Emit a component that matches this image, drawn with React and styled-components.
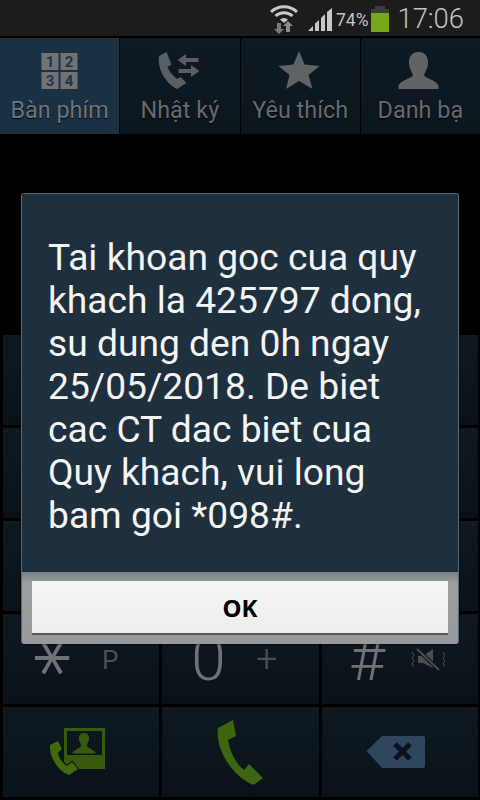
import React from "react";
import styled, { createGlobalStyle } from "styled-components";

const Global = createGlobalStyle`
  html, body { margin: 0; padding: 0; background: #000; }
  body { font-family: Roboto, "Noto Sans", sans-serif; }
`;
const Screen = styled.div`
  position: relative; width: 480px; height: 800px; overflow: hidden; background: #000;
  display: flex; flex-direction: column;
`;
const StatusBar = styled.div`
  height: 36px; background: #1c1c1c; display: flex; align-items: center; justify-content: flex-end;
  padding-right: 16px; flex-shrink: 0; color: #c4c4c4;
`;
const WifiIcon = styled.svg`margin-top: 1px;`;
const SignalIcon = styled.svg`margin: 3px 0 0 10px;`;
const BatteryIcon = styled.svg`margin: 2px 0 0 3px;`;
const Percent = styled.span`font-size: 17.5px; margin: 3px 0 0 4px;`;
const Clock = styled.span`font-size: 27.4px; margin-left: 8px; font-weight: 300; margin-top: 1px;`;
const Tabs = styled.div`
  height: 96px; margin-top: 2px; display: grid; grid-template-columns: repeat(4, 1fr); gap: 1px; flex-shrink: 0;
`;
const Tab = styled.div`
  background: ${p => p.$active ? "#1a3043" : "linear-gradient(#0e1a23,#0c161d)"};
  display: flex; flex-direction: column; align-items: center;
  font-size: 23.4px; padding-top: 9px; box-sizing: border-box;
  svg { height: 48px; width: 48px; display: block; }
`;
const TabLabel = styled.span`
  line-height: 30px; color: ${p => p.$active ? "#6f7478" : "#676b6e"};
  text-shadow: 0 1px 1px #000;
`;
const Keypad = styled.div`
  margin-top: auto; height: 465px; padding: 0 3px 3px; box-sizing: border-box;
  display: grid; grid-template-columns: 156px 157px 156px; grid-template-rows: repeat(5, 1fr); gap: 3px;
`;
const Key = styled.div`
  background: linear-gradient(#0e1922, #0a1218); display: flex; align-items: center; justify-content: center; position: relative;
  color: #707274;
`;
const Digit = styled.span`
  font-size: 62px; font-weight: 300; line-height: 1; position: relative;
  left: ${p => p.$x || 0}px; top: ${p => p.$y || 0}px;
`;
const Asterisk = styled.span`
  font-family: "DejaVu Sans", sans-serif; font-size: 74px; line-height: 1; position: absolute;
  left: 18px; top: 7px; transform: rotate(90deg);
`;
const Sub = styled.span`
  font-size: ${p => p.$size || 26}px; font-weight: ${p => p.$weight || 400}; color: #4c5054; position: absolute; line-height: 1;
  left: ${p => p.$x}px; top: ${p => p.$y}px;
`;
const Dialog = styled.div`
  position: absolute; left: 21px; top: 193px; width: 438px; height: 451px; border-radius: 3px; overflow: hidden;
  display: flex; flex-direction: column; box-sizing: border-box; border: 1px solid #5d6a74; border-bottom: none;
  box-shadow: 0 0 2px #000;
`;
const Message = styled.div`
  flex: 1; background: #1e2f3e; color: #f5f5f5; font-size: 37.2px; line-height: 43px; padding: 42px 0 0 26px;
  white-space: pre-line;
`;
const Footer = styled.div`
  height: 72px; background: linear-gradient(#7c8185, #9b9fa2 12px, #969a9d); padding: 9px 10px 0; box-sizing: border-box; flex-shrink: 0;
`;
const OkButton = styled.div`
  height: 52px; background: linear-gradient(#f5f5f5, #eeeeee); box-shadow: 0 2px 0 #55595c;
  display: flex; align-items: center; justify-content: center; color: #000;
  font-family: "Noto Sans", sans-serif; font-weight: 700; font-size: 24px;
`;
const BackspaceIcon = styled.svg`margin-right: 8px;`;
const CardIcon = styled.svg`margin-right: 7px;`;
const MuteIcon = styled.svg`position: absolute; left: 89px; top: 34px;`;

const Wifi = () => (
  <WifiIcon width="28" height="30" viewBox="0 0 28 30">
    <path d="M1 8a19 19 0 0 1 26 0" fill="none" stroke="#c8c8c8" strokeWidth="3" />
    <path d="M5.5 12a12.5 12.5 0 0 1 17 0" fill="none" stroke="#c8c8c8" strokeWidth="3" />
    <path d="M10 15.5a6 6 0 0 1 8 0l-4 3.5z" fill="#c8c8c8" />
    <path d="M9 30l-5-5h3v-6h4v6h3z" fill="#7a7a7a" />
    <path d="M18 17l5 5h-3v6h-4v-6h-3z" fill="#8a8a8a" />
  </WifiIcon>
);
const Signal = () => (
  <SignalIcon width="24" height="23" viewBox="0 0 24 23" fill="#c8c8c8">
    <path d="M0 23L5 18V23ZM7 23V15.5L11 12V23ZM13 23V10L17 6V23ZM19 23V4L24 0V23Z" />
  </SignalIcon>
);
const Battery = () => (
  <BatteryIcon width="18" height="26" viewBox="0 0 18 26">
    <rect x="4" y="0" width="10" height="3" fill="#3c3c3c" />
    <rect x="0" y="3" width="18" height="5" fill="#3c3c3c" />
    <rect x="0" y="7" width="18" height="19" fill="#76a81a" />
  </BatteryIcon>
);
const Dial = () => (
  <svg viewBox="0 0 48 48">
    <g fill="#707274">
      <rect x="5.5" y="6" width="17" height="17" /><rect x="24.5" y="6" width="17" height="17" />
      <rect x="5.5" y="25" width="17" height="17" /><rect x="24.5" y="25" width="17" height="17" />
    </g>
    <g fill="#1f364a" fontSize="15" fontWeight="700" fontFamily="Roboto" textAnchor="middle">
      <text x="14" y="20">1</text><text x="33" y="20">2</text>
      <text x="14" y="39">3</text><text x="33" y="39">4</text>
    </g>
  </svg>
);
const Log = () => (
  <svg viewBox="0 0 48 48" fill="#5a5e61">
    <path d="M10.5 5L3 9C1 21 9 36 21 42L30.5 36L24.5 30L21 32C16 28 13 24 11.5 20L15.5 17.5Z" />
    <path d="M21.5 13L30 7V11H42.5V15H30V19ZM43.5 24L35 18V22H22.5V26H35V30Z" />
  </svg>
);
const Star = () => (
  <svg viewBox="0 0 48 48" fill="#5f6366">
    <path d="M23 4L28.5 17.5L43.5 19L32.5 28L36.5 42L23 34L10 42L13.5 28L2.5 19L17.5 17.5Z" />
  </svg>
);
const Person = () => (
  <svg viewBox="0 0 48 48" fill="#606467">
    <path d="M22.5 5C15 5 12.5 11 13 17C13.5 22 16 25 17 28C17 31 4 33 2.5 39V42H42.5V39C41 33 28 31 28 28C29 25 31.5 22 32 17C32.5 11 30 5 22.5 5Z" />
  </svg>
);
const CardCall = () => (
  <CardIcon width="56" height="50" viewBox="0 0 56 50">
    <path d="M14 1H55V42H14ZM17 4V28H52V4Z" fill="#385a0c" fillRule="evenodd" />
    <path d="M34 6C29.500 6 28.500 9.500 29 12.500C29.500 15 31 16.500 31 19C31 21 24 22 22 26.500H46C44 22 37 21 37 19C37 16.500 38.500 15 39 12.500C39.500 9.500 38.500 6 34 6Z" fill="#385a0c" />
    <path d="M0 18L8 14L12 22L8 26C9 32 13 36 17 39L22 35L28 42L19 48C8 44 -1 30 0 18Z" fill="#3f6a0e" stroke="#0b141b" strokeWidth="2" paintOrder="stroke" />
  </CardIcon>
);
const BigCall = () => (
  <svg width="50" height="68" viewBox="215 717 50 68">
    <path d="M232 719L217 727C214 745 228 772 250 783Q252 784 254 783L262 777L248 763L243 769C234 762 229 750 227 739L235 735Z" fill="#3d6610" />
  </svg>
);
const Backspace = () => (
  <BackspaceIcon width="60" height="34" viewBox="0 0 60 34">
    <path d="M0.500 16L16 1H57Q59 1 59 3V31Q59 33 57 33H16Z" fill="#2e475e" />
    <path d="M29 9L44 24M44 9L29 24" stroke="#0b141b" strokeWidth="5" />
  </BackspaceIcon>
);
const Mute = () => (
  <MuteIcon width="34" height="24" viewBox="0 0 34 24">
    <path d="M7 8H12L22 1V20L12 15H7Z" fill="#4a4e51" />
    <path d="M6 1L28 22" stroke="#0b141b" strokeWidth="4" />
    <path d="M6 1L28 22" stroke="#4a4e51" strokeWidth="2" />
    <path d="M1 4l2 3-2 3 2 3-2 3 2 3M32 4l2 3-2 3 2 3-2 3 2 3" stroke="#4a4e51" fill="none" />
  </MuteIcon>
);

const tabs = [
  { label: "Bàn phím", Icon: Dial, active: true },
  { label: "Nhật ký", Icon: Log },
  { label: "Yêu thích", Icon: Star },
  { label: "Danh bạ", Icon: Person },
];
const blank = Array.from({ length: 9 });

export default function App() {
  return (
    <Screen>
      <Global />
      <StatusBar>
        <Wifi /><Signal /><Percent>74%</Percent><Battery /><Clock>17:06</Clock>
      </StatusBar>
      <Tabs>
        {tabs.map(({ label, Icon, active }) => (
          <Tab key={label} $active={active}>
            <Icon />
            <TabLabel $active={active}>{label}</TabLabel>
          </Tab>
        ))}
      </Tabs>
      <Keypad>
        {blank.map((_, i) => <Key key={i} />)}
        <Key><Asterisk>*</Asterisk><Sub $x={99} $y={33}>P</Sub></Key>
        <Key><Digit $x={-32} $y={0}>0</Digit><Sub $size={38} $weight={300} $x={94} $y={26}>+</Sub></Key>
        <Key><Digit $x={-33} $y={0}>#</Digit><Mute /></Key>
        <Key><CardCall /></Key>
        <Key><BigCall /></Key>
        <Key><Backspace /></Key>
      </Keypad>
      <Dialog>
        <Message>{"Tai khoan goc cua quy\nkhach la 425797 dong,\nsu dung den 0h ngay\n25/05/2018. De biet\ncac CT dac biet cua\nQuy khach, vui long\nbam goi *098#."}</Message>
        <Footer><OkButton>OK</OkButton></Footer>
      </Dialog>
    </Screen>
  );
}
